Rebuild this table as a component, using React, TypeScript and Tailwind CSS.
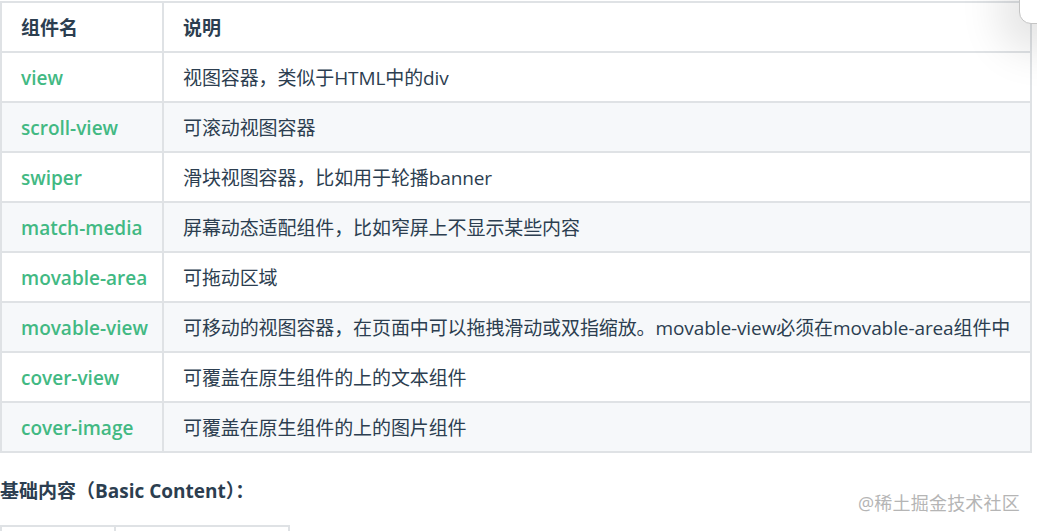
const rows = [
  { name: "view", desc: "视图容器，类似于HTML中的div" },
  { name: "scroll-view", desc: "可滚动视图容器" },
  { name: "swiper", desc: "滑块视图容器，比如用于轮播banner" },
  { name: "match-media", desc: "屏幕动态适配组件，比如窄屏上不显示某些内容" },
  { name: "movable-area", desc: "可拖动区域" },
  {
    name: "movable-view",
    desc: "可移动的视图容器，在页面中可以拖拽滑动或双指缩放。movable-view必须在movable-area组件中",
  },
  { name: "cover-view", desc: "可覆盖在原生组件的上的文本组件" },
  { name: "cover-image", desc: "可覆盖在原生组件的上的图片组件" },
];

const font = { fontFamily: '"Open Sans", "Noto Sans CJK SC", sans-serif' };

export default function App() {
  return (
    <div
      className="relative w-[1037px] h-[531px] overflow-hidden bg-white text-[#2c3e50] text-[19px]"
      style={font}
    >
      {/* popup corner peeking in at top right */}
      <div className="absolute -top-3 left-[1019px] w-10 h-9 bg-white border border-[#c4c4c4] rounded-bl-xl shadow-[0_8px_40px_20px_rgba(0,0,0,0.1)]" />

      <table className="mt-px border-collapse w-[1032px] table-fixed">
        <colgroup>
          <col className="w-[162px]" />
          <col />
        </colgroup>
        <thead>
          <tr>
            <th className="border-2 border-[#dfe2e5] h-[50px] pl-[19px] pt-[2px] text-left font-bold">
              组件名
            </th>
            <th className="border-2 border-[#dfe2e5] h-[50px] pl-[19px] pt-[2px] text-left font-bold">
              说明
            </th>
          </tr>
        </thead>
        <tbody>
          {rows.map((r, i) => (
            <tr key={r.name} className={i % 2 === 1 ? "bg-[#f6f8fa]" : "bg-white"}>
              <td className="border-2 border-[#dfe2e5] h-[50px] pl-[19px] pt-[2px] text-[#42b983] font-semibold whitespace-nowrap">
                {r.name}
              </td>
              <td className="border-2 border-[#dfe2e5] h-[50px] pl-[19px] pt-[2px] whitespace-nowrap tracking-[-0.1px]">
                {r.desc}
              </td>
            </tr>
          ))}
        </tbody>
      </table>

      <div className="mt-[26px] font-bold text-[19px] leading-[24px]">基础内容（Basic Content）：</div>

      <div className="mt-[22px] flex w-[290px] h-6 border-t-2 border-x-2 border-[#dfe2e5]">
        <div className="w-[114px] border-r-2 border-[#dfe2e5]" />
      </div>

      <div className="absolute left-[858px] top-[490px] text-[18px] text-[#b5b5b5] tracking-[0.2px]">
        @稀土掘金技术社区
      </div>
    </div>
  );
}
